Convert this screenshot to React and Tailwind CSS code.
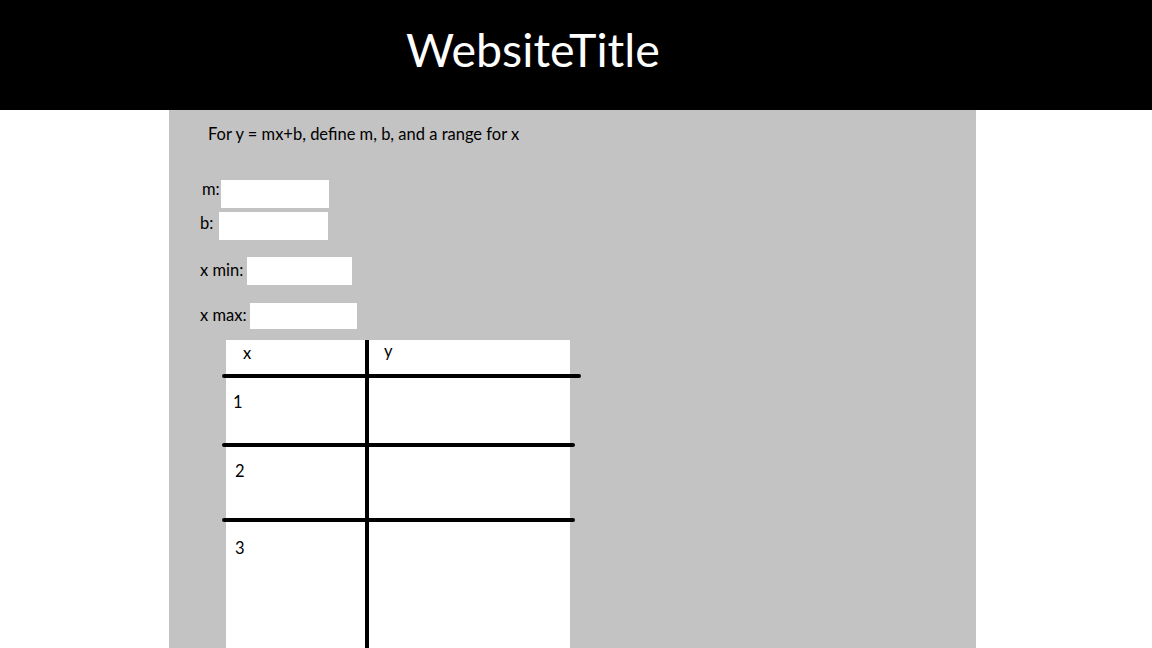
import React from "react";

const rows = [
  { label: "1", h: "h-[65px]", pt: "pt-[15px]", pl: "pl-[7px]" },
  { label: "2", h: "h-[71px]", pt: "pt-[15px]", pl: "pl-[9px]" },
  { label: "3", h: "h-[140px]", pt: "pt-[17px]", pl: "pl-[9px]" },
];

const Field = ({ label, labelW, labelPl, inputW, inputH, mt, labelMt = "" }) => (
  <div className={`flex items-center ${mt} ${labelPl}`}>
    <span className={`${labelW} ${labelMt} whitespace-nowrap`}>{label}</span>
    <input type="text" className={`${inputW} ${inputH} bg-white outline-none border-0`} />
  </div>
);

const App = () => {
  return (
    <div className="w-[1152px] h-[648px] overflow-hidden bg-white font-['Lato',sans-serif] text-black">
      <header className="h-[110px] bg-black flex items-center pl-[406px]">
        <h1 className="text-white text-[46.5px] leading-none -mt-[11px]">WebsiteTitle</h1>
      </header>

      <main className="ml-[169px] w-[807px] h-[538px] bg-[#c3c3c3] overflow-hidden text-[16.5px]">
        <p className="pt-[15px] pl-[39px] leading-[18px]">For y = mx+b, define m, b, and a range for x</p>

        <div className="flex items-start mt-[37px] pl-[33px]">
          <span className="w-[19px] leading-[18px] whitespace-nowrap">m:</span>
          <input type="text" className="w-[108px] h-[28px] bg-white outline-none" />
        </div>
        <Field label="b:" labelW="w-[19px]" labelPl="pl-[31px]" inputW="w-[109px]" inputH="h-[28px]" mt="mt-[4px]" labelMt="-mt-[6px]" />
        <Field label="x min:" labelW="w-[47px]" labelPl="pl-[31px]" inputW="w-[105px]" inputH="h-[28px]" mt="mt-[17px]" labelMt="-mt-[2px]" />
        <Field label="x max:" labelW="w-[50px]" labelPl="pl-[31px]" inputW="w-[107px]" inputH="h-[26px]" mt="mt-[18px]" labelMt="-mt-[2px]" />

        {/* hand-drawn x/y table */}
        <div className="mt-[11px] ml-[57px] w-[344px] bg-white flex flex-col">
          <div className="flex h-[34px]">
            <div className="w-[139px] pl-[17px] pt-[4px] leading-[18px]">x</div>
            <div className="w-[4px] bg-black"></div>
            <div className="flex-1 pl-[15px] pt-[2px] leading-[18px]">y</div>
          </div>
          <div className="h-[4px] w-[359px] -ml-[4px] bg-black rounded-full"></div>
          {rows.map((r, i) => (
            <React.Fragment key={r.label}>
              <div className={`flex ${r.h}`}>
                <div className={`w-[139px] ${r.pl} ${r.pt} leading-[18px]`}>{r.label}</div>
                <div className="w-[4px] bg-black"></div>
                <div className="flex-1"></div>
              </div>
              {i < rows.length - 1 && (
                <div className="h-[4px] w-[353px] -ml-[4px] bg-black rounded-full"></div>
              )}
            </React.Fragment>
          ))}
        </div>
      </main>
    </div>
  );
};

export default App;
